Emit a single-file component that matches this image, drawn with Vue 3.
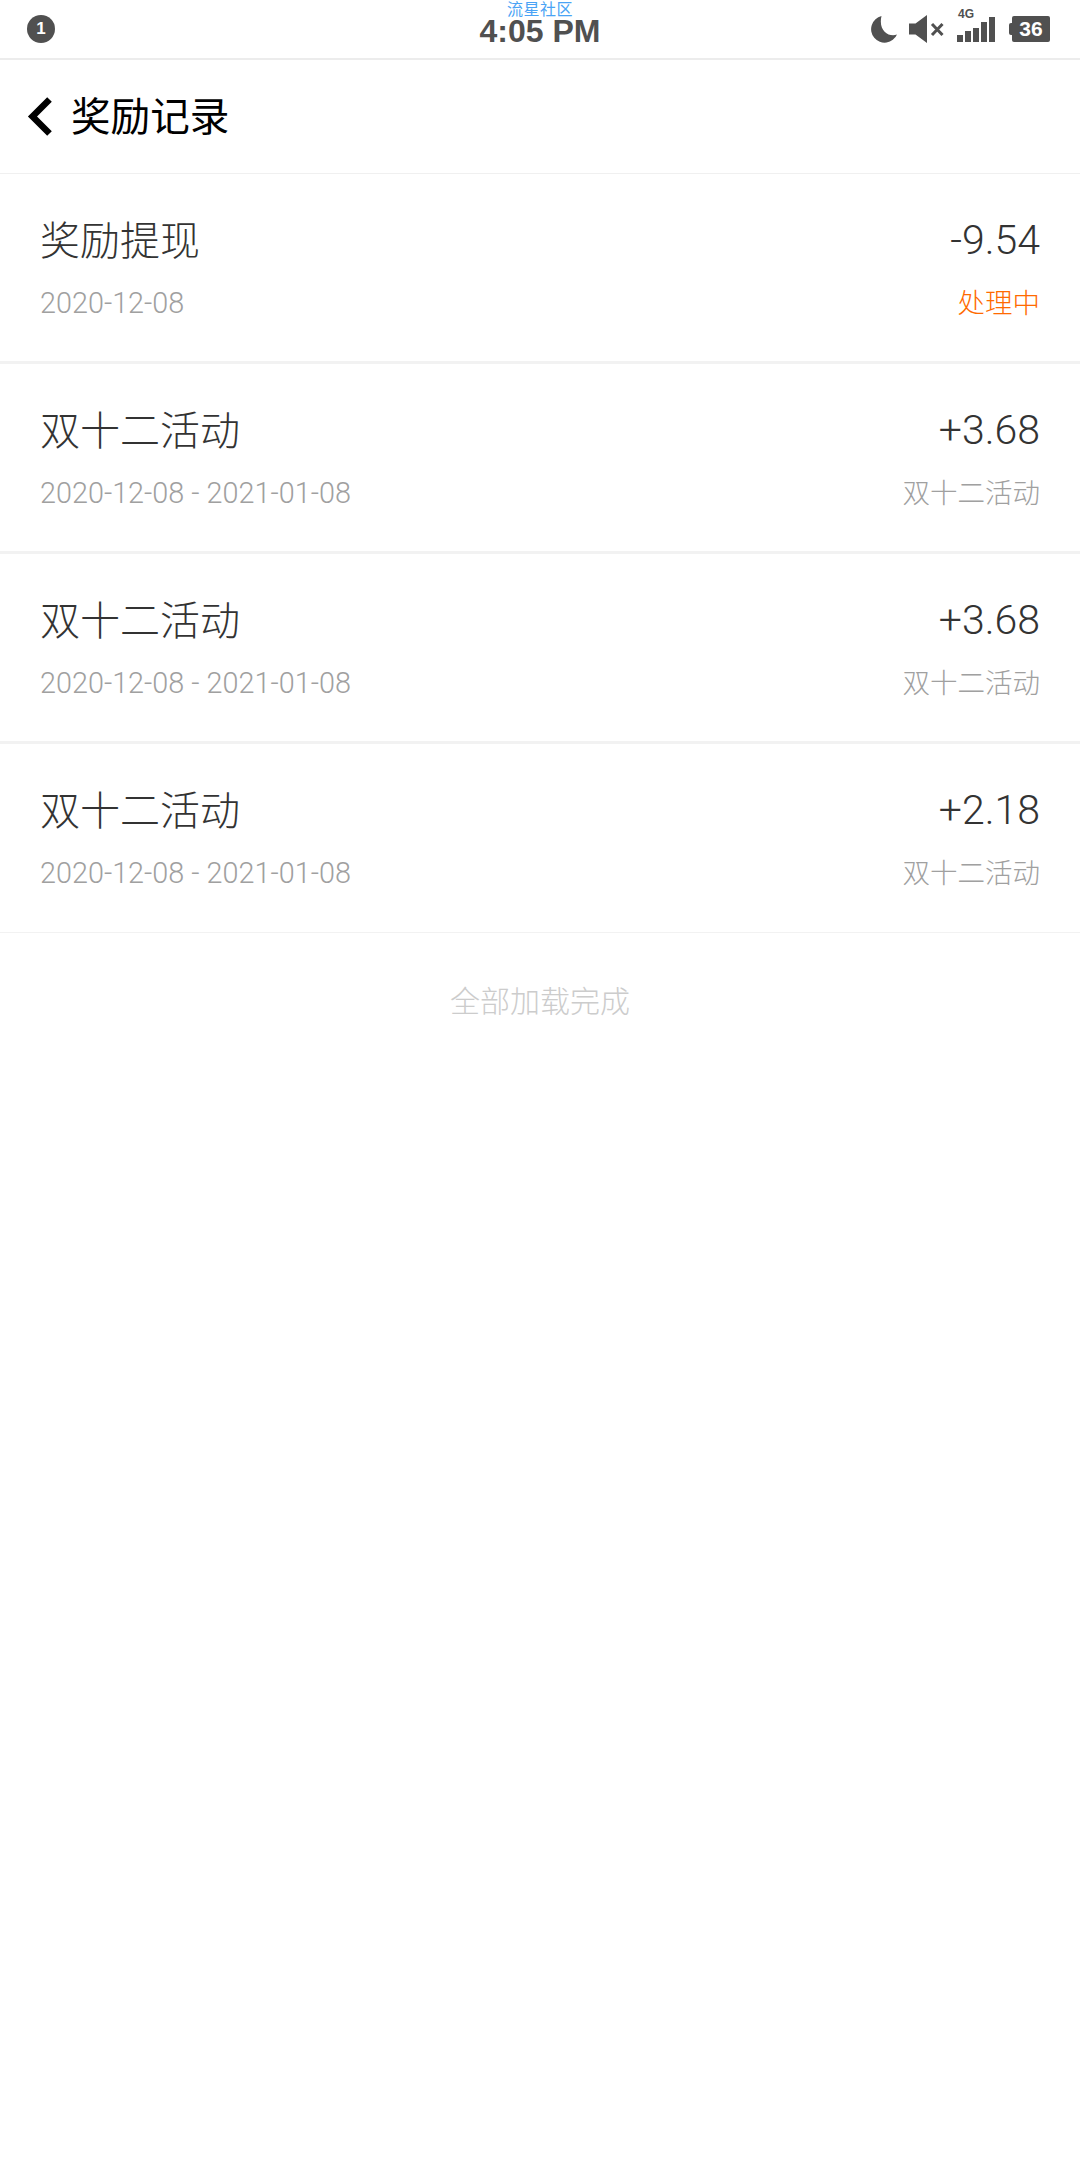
<template>
  <div class="page">
    <div class="status-bar">
      <div class="status-side">
        <span class="notice">1</span>
      </div>
      <div class="status-center">
        <span class="brand">流星社区</span>
        <span class="clock">4:05 PM</span>
      </div>
      <div class="status-side status-right">
        <svg class="moon" width="28" height="28" viewBox="0 0 28 28">
          <path d="M11.500 1A13.500 13.500 0 1 0 27 19.500C19 22.500 8 16 11.500 1Z" fill="#505050" />
        </svg>
        <svg class="mute" width="35" height="28" viewBox="0 0 35 28">
          <path d="M0 8.500H6.500L18 0V28L6.500 19.500H0Z" fill="#505050" />
          <path d="M23 9L33.500 20M33.500 9L23 20" stroke="#505050" stroke-width="3" fill="none" />
        </svg>
        <div class="signal">
          <span class="net">4G</span>
          <svg width="38" height="25" viewBox="0 0 38 25">
            <rect x="0" y="18" width="6" height="7" fill="#505050" />
            <rect x="8" y="14" width="6" height="11" fill="#505050" />
            <rect x="16" y="11" width="6" height="14" fill="#505050" />
            <rect x="24" y="5" width="6" height="20" fill="#505050" />
            <rect x="32" y="0" width="6" height="25" fill="#505050" />
          </svg>
        </div>
        <div class="battery">
          <span class="battery-cap"></span>
          <span class="battery-body">36</span>
        </div>
      </div>
    </div>

    <header class="nav">
      <svg class="back" width="26" height="42" viewBox="0 0 26 42">
        <path d="M22.500 3.500L5.500 20.500L22.500 37.500" fill="none" stroke="#000" stroke-width="6.500" />
      </svg>
      <h1 class="nav-title">奖励记录</h1>
    </header>

    <ul class="records">
      <li v-for="(item, index) in records" :key="index" class="record">
        <div class="record-line">
          <span class="record-name">{{ item.name }}</span>
          <span class="record-amount">{{ item.amount }}</span>
        </div>
        <div class="record-line record-sub">
          <span class="record-date">{{ item.date }}</span>
          <span class="record-note" :class="{ pending: item.pending }">{{ item.note }}</span>
        </div>
      </li>
    </ul>

    <div class="finished">全部加载完成</div>
  </div>
</template>

<script setup>
const range = '2020-12-08 - 2021-01-08'

const records = [
  { name: '奖励提现', amount: '-9.54', date: '2020-12-08', note: '处理中', pending: true },
  { name: '双十二活动', amount: '+3.68', date: range, note: '双十二活动' },
  { name: '双十二活动', amount: '+3.68', date: range, note: '双十二活动' },
  { name: '双十二活动', amount: '+2.18', date: range, note: '双十二活动' },
]
</script>

<style>
html,
body {
  margin: 0;
  background: #fff;
}
</style>

<style scoped>
.page {
  min-height: 2160px;
  background: #fff;
  font-family: "Liberation Sans", "Noto Sans CJK SC", sans-serif;
}

.status-bar {
  position: relative;
  display: flex;
  justify-content: space-between;
  align-items: center;
  height: 58px;
  padding: 0 30px 0 27px;
  border-bottom: 2px solid #ececec;
}

.status-side {
  display: flex;
  align-items: center;
}

.status-right {
  gap: 11px;
}

.notice {
  display: flex;
  align-items: center;
  justify-content: center;
  width: 28px;
  height: 28px;
  border-radius: 50%;
  background: #505050;
  color: #fff;
  font-family: "Liberation Sans", sans-serif;
  font-size: 17px;
  font-weight: 700;
}

.status-center {
  position: absolute;
  top: 0;
  left: 0;
  right: 0;
  display: flex;
  flex-direction: column;
  align-items: center;
}

.brand {
  height: 16px;
  color: #4aa3f5;
  font-family: "Noto Sans CJK SC", sans-serif;
  font-size: 16px;
  font-weight: 400;
  letter-spacing: 0.5px;
  line-height: 16px;
}

.clock {
  color: #505050;
  font-family: "Liberation Sans", sans-serif;
  font-size: 32px;
  font-weight: 700;
  line-height: 30px;
}

.signal {
  position: relative;
  display: flex;
  margin-left: 2px;
}

.net {
  position: absolute;
  top: -9px;
  left: 1px;
  color: #505050;
  font-family: "Liberation Sans", sans-serif;
  font-size: 12px;
  font-weight: 700;
  line-height: 12px;
}

.battery {
  display: flex;
  align-items: center;
  margin-left: 3px;
}

.battery-cap {
  width: 3px;
  height: 12px;
  background: #505050;
  border-radius: 2px 0 0 2px;
}

.battery-body {
  display: flex;
  align-items: center;
  justify-content: center;
  width: 38px;
  height: 26px;
  border-radius: 2px;
  background: #505050;
  color: #fff;
  font-family: "Liberation Sans", sans-serif;
  font-size: 21px;
  font-weight: 700;
}

.nav {
  display: flex;
  align-items: center;
  height: 113px;
  padding-left: 27px;
  border-bottom: 1px solid #f0f0f0;
}

.back {
  margin-right: 18px;
}

.nav-title {
  margin: 0 0 6px;
  color: #000;
  font-family: "Noto Sans CJK SC", sans-serif;
  font-size: 39.6px;
  font-weight: 400;
}

.records {
  margin: 0;
  padding: 0;
  list-style: none;
}

.record {
  box-sizing: border-box;
  height: 190px;
  padding: 37px 40px 0;
  border-bottom: 3px solid #f2f2f2;
}

.record:last-child {
  height: 189px;
  border-bottom-width: 1px;
}

.record-line {
  display: flex;
  justify-content: space-between;
  align-items: center;
  height: 54px;
}

.record-sub {
  height: 40px;
  margin-top: 17px;
}

.record-name {
  color: #333;
  font-family: "Noto Sans CJK SC", sans-serif;
  font-size: 40px;
  font-weight: 300;
}

.record-amount {
  margin-top: 3px;
  color: #333;
  font-family: Roboto, sans-serif;
  font-size: 41px;
  font-weight: 300;
}

.record-date {
  margin-top: 2px;
  color: #a0a0a0;
  font-family: Roboto, sans-serif;
  font-size: 28.8px;
  font-weight: 300;
}

.record-note {
  margin-top: -2px;
  color: #a0a0a0;
  font-family: "Noto Sans CJK SC", sans-serif;
  font-size: 27.5px;
  font-weight: 300;
}

.pending {
  color: #ff6a00;
}

.finished {
  margin-top: 44px;
  color: #cccccc;
  font-family: "Noto Sans CJK SC", sans-serif;
  font-size: 30px;
  font-weight: 300;
  line-height: 44px;
  text-align: center;
}
</style>
